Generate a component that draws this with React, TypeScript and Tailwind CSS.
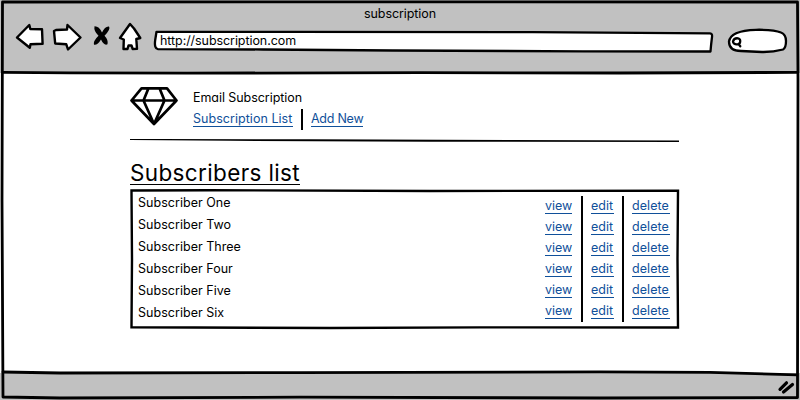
import React from "react";

const ink = { fill: "none", stroke: "#000", strokeLinejoin: "round", strokeLinecap: "round" } as const;

function WindowFrame() {
  return (
    <svg className="pointer-events-none absolute inset-0" width="800" height="400" {...ink} strokeWidth="2.8">
      <path d="M2.5 2 L300 1.8 L797.5 2 L798 80 L797.5 397.5 L600 398 L300 397.2 L60 398 L3 397 L2 200 Z" />
      <path d="M3 72.3 L70 72.8 L187 73.2 L420 72.6 L620 73 L797 72.4" />
      <path d="M3 372 L60 373 L300 372.6 L600 371.8 L710 372.3 L797 374.8" />
    </svg>
  );
}

function NavIcons() {
  return (
    <svg className="block" width="130" height="34" viewBox="14 20 130 34" {...ink} strokeWidth="2.4">
      <g fill="#fff">
        <path d="M17 37.5 L29.3 25 L30.3 29 L42 29.3 L42.6 43.8 L30.5 44.3 L29.8 47.8 Z" />
        <path d="M54 31 L56 30 L67 29.5 L67.5 25 L80.5 37.5 L68 49.5 L66.3 44.3 L55.2 43.5 Z" />
        <path d="M130 24 L134 28.5 L140.3 38 L136.3 39 L137 48.8 L132.7 49 L131.5 45.5 L128.5 45.5 L127.5 49 L123.5 49 L123.8 39.5 L120 38 Z" />
      </g>
      <path fill="#000" stroke="none" d="M94.5 26.3 Q99 26 102 32.5 Q105 26 109 26.5 Q111 29 104.5 35.8 Q108.5 40 107.5 44.3 Q104 46 101 39.5 Q97.5 45.5 94 44.8 Q93 41 98.5 35.8 Q93.5 31 94.5 26.3 Z" />
    </svg>
  );
}

function AddressBar() {
  return (
    <div className="relative mt-[31px] ml-[9px] h-[21px] w-[560px]">
      <svg className="absolute inset-0 overflow-visible" width="560" height="21" {...ink} strokeWidth="2.3">
        <path fill="#fff" d="M3.5 .8 L140 .8 L380 1.2 L557 2.3 Q559.5 2.5 559 6 Q558 14 557.5 20.5 L430 20.3 L240 19.5 L110 18.5 L5 18.2 Q1 17.8 2.2 9 Z" />
      </svg>
      <span className="absolute top-[1px] left-[7px] text-[12.5px] leading-[18px] tracking-[-0.07px] whitespace-nowrap">http://subscription.com</span>
    </div>
  );
}

function SearchBox() {
  return (
    <svg className="mt-[27px] ml-[13px] block" width="62" height="28" viewBox="726 27 62 28" {...ink} strokeWidth="2.3">
      <path fill="#fff" d="M729 41.5 Q730.5 30.5 756 29.8 Q774 29.5 781 32.5 Q786 34.5 786 41 Q786 48 783 49.5 Q773 52.2 762 52 L741 51 Q729 51 729 41.5 Z" />
      <path d="M733 41.5 Q734 37.8 738 38.3 Q741 39 740 42.8 Q737 45.5 734 43.5 Q733 42.5 733 41.5 Z M738.5 44 L740.3 46.3" />
    </svg>
  );
}

function Diamond() {
  return (
    <svg className="mt-[11px] block" width="49" height="41" viewBox="130 86 49 41" {...ink} strokeWidth="2.7">
      <path d="M141.5 88.3 L167 88.3 L176.5 100.5 L154 124 L131.5 100.5 Z M131.5 100.5 L176.5 100.5 M148.5 88.3 L143.5 100.5 L154 124 L164.5 100.5 L159.5 88.3" />
    </svg>
  );
}

function Link({ children, className = "" }: { children: string; className?: string }) {
  return (
    <a className={`inline-block border-b border-[#10509a] leading-[15px] whitespace-nowrap text-[#10509a] ${className}`}>{children}</a>
  );
}

const subscribers = ["One", "Two", "Three", "Four", "Five", "Six"];

export default function App() {
  return (
    <div className="relative flex h-[400px] w-[800px] flex-col overflow-hidden bg-white font-['Inter','Liberation_Sans',sans-serif] text-[12.5px] text-black [font-feature-settings:'cv11']">
      <header className="relative flex h-[73px] shrink-0 bg-[#c1c1c1]">
        <div className="mt-5 ml-[14px]"><NavIcons /></div>
        <AddressBar />
        <SearchBox />
        <h1 className="absolute inset-x-0 top-[5px] text-center leading-[18px] tracking-[-0.08px]">subscription</h1>
      </header>

      <main className="ml-[130px] flex w-[549px] flex-1 flex-col">
        <div className="flex h-[65px]">
          <div className="mt-[2px]"><Diamond /></div>
          <div className="ml-[14px] pt-4">
            <p className="leading-[18px] tracking-[-0.06px]">Email Subscription</p>
            <nav className="mt-[2px] flex h-[21px]">
              <Link className="mt-[2px] h-4 w-[100px] self-start tracking-[0.04px]">Subscription List</Link>
              <span className="ml-2 w-0.5 bg-black" />
              <Link className="mt-[2px] ml-2 h-4 w-[52px] self-start tracking-[-0.25px]">Add New</Link>
            </nav>
          </div>
        </div>
        <svg className="block shrink-0" width="549" height="5">
          <path d="M0 1 L30 1 L180 1.2 L549 2.6 L549 4 L300 3.8 L100 2.8 L0 2 Z" />
        </svg>

        <h2 className="mt-[17px] h-[25px] self-start border-b border-black text-[22.5px] leading-[26px] tracking-[0.36px] whitespace-nowrap">Subscribers list</h2>

        <section className="relative mt-1 flex h-[140px] shrink-0 justify-between">
          <svg className="absolute inset-0 overflow-visible" width="549" height="140" {...ink} strokeWidth="2.4" strokeLinejoin="miter">
            <path d="M1.5 1.5 L80 1.2 L300 2 L548 1.6 L547.5 70 L548 138.5 L350 138.4 L200 139 L1.5 138.2 L2 70 Z" />
          </svg>
          <ul className="pt-[3px] pl-2 tracking-[0.03px]">
            {subscribers.map((name) => (
              <li key={name} className="h-[22px] leading-[22px]">Subscriber {name}</li>
            ))}
          </ul>
          <div className="mr-[9px] pt-[7px]">
            {subscribers.map((name) => (
              <div key={name} className="flex h-[21px]">
                <Link className="mt-[2px] h-4 w-[27px] self-start">view</Link>
                <span className="ml-[9px] w-0.5 bg-black" />
                <Link className="mt-[2px] ml-2 h-4 w-[23px] self-start">edit</Link>
                <span className="ml-2 w-0.5 bg-black" />
                <Link className="mt-[2px] ml-2 h-4 w-[38px] self-start tracking-[0.08px]">delete</Link>
              </div>
            ))}
          </div>
        </section>
      </main>

      <footer className="flex h-[27px] shrink-0 justify-end bg-[#c1c1c1]">
        <svg className="mt-[5px] mr-[3px] block" width="20" height="18" viewBox="777 378 20 18" {...ink} strokeWidth="3.2">
          <path d="M780 389.3 L786.5 382.8 M783.5 392 L792.5 384.5" />
        </svg>
      </footer>
      <WindowFrame />
    </div>
  );
}
